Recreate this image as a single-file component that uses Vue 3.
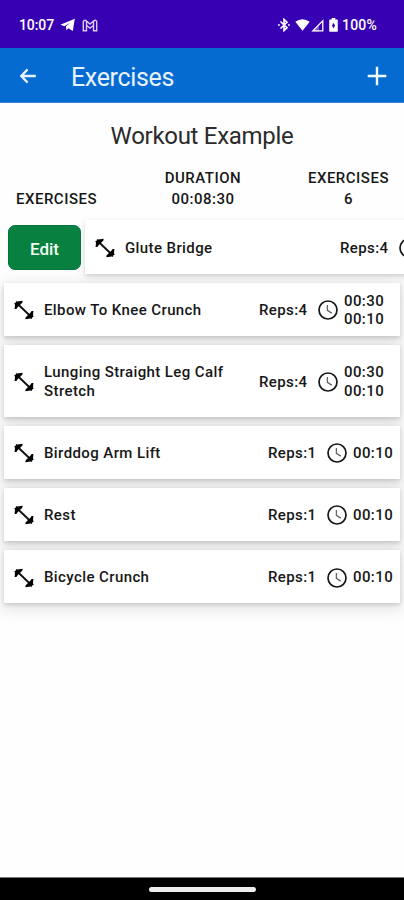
<script setup>
const exercises = [
  { name: 'Glute Bridge', reps: 4, times: [], swiped: true },
  { name: 'Elbow To Knee Crunch', reps: 4, times: ['00:30', '00:10'] },
  { name: 'Lunging Straight Leg Calf Stretch', reps: 4, times: ['00:30', '00:10'], tall: true },
  { name: 'Birddog Arm Lift', reps: 1, times: ['00:10'] },
  { name: 'Rest', reps: 1, times: ['00:10'] },
  { name: 'Bicycle Crunch', reps: 1, times: ['00:10'] },
]
</script>

<template>
  <div class="screen">
    <header class="status">
      <div class="status-left">
        <span class="clock-text">10:07</span>
        <svg class="telegram" width="16" height="14" viewBox="0 0 16 14">
          <path d="M.4 6.8 14.8.8 12.8 13 8.4 10.2 6.4 12.2 5.9 8.6 10.5 4.6 4.5 8.2Z" fill="#fff" />
        </svg>
        <svg class="gmail" width="16" height="13" viewBox="0 0 16 13">
          <path d="M4.5 11.8H1.3V2.3Q2.8.3 4.5 2L8 5 11.5 2Q13.2.3 14.7 2.3V11.8H11.5V6.3L8 9.2 4.5 6.3ZM4.5 2V6.3M11.5 2V6.3" fill="none" stroke="#d9cbf6" stroke-width="1.4" />
        </svg>
      </div>
      <div class="status-right">
        <svg width="12" height="14" viewBox="0 0 12 14">
          <path d="M2.5 3.5 9 9.8 6 12.6V1.4L9 4.2 2.5 10.5" fill="none" stroke="#fff" stroke-width="1.6" />
          <path d="M0 6.2h1.8v1.6H0zM10 6.2h1.8v1.6H10z" fill="#fff" />
        </svg>
        <svg class="wifi" width="15" height="12" viewBox="0 0 15 12">
          <path d="M.3 2.8Q7.5-2.4 14.7 2.8L7.5 11.8Z" fill="#fff" />
        </svg>
        <svg class="signal" width="13" height="13" viewBox="0 0 13 13">
          <path d="M1.8 11.9 11.8 1.8V11.9Z" fill="none" stroke="#fff" stroke-width="1.3" />
          <path d="M1 12.4 8 5.4V12.4Z" fill="#fff" opacity=".35" />
        </svg>
        <svg class="battery" width="9" height="14" viewBox="0 0 9 14">
          <path d="M2.7 0h3.6v1.5H8q.8 0 .8.8v10.6q0 .8-.8.8H1q-.8 0-.8-.8V2.3q0-.8.8-.8h1.7z" fill="#fff" />
          <path d="M4.5 4.8 6 7.5 4.5 10.4 3 7.5Z" fill="#3700b3" />
        </svg>
        <span class="percent">100%</span>
      </div>
    </header>

    <nav class="appbar">
      <svg width="18" height="18" viewBox="0 0 18 18">
        <path d="M16.8 9H2.6M8.6 2.4 2.3 9l6.3 6.6" fill="none" stroke="#e9f3ff" stroke-width="2.3" />
      </svg>
      <h1>Exercises</h1>
      <svg class="plus" width="20" height="20" viewBox="0 0 20 20">
        <path d="M10 .7V19.3M.7 10H19.3" stroke="#f4f9ff" stroke-width="2.4" />
      </svg>
    </nav>

    <h2>Workout Example</h2>
    <section class="summary">
      <div class="label">EXERCISES</div>
      <div class="stat duration"><span>DURATION</span><span class="num">00:08:30</span></div>
      <div class="stat count"><span>EXERCISES</span><span>6</span></div>
    </section>

    <main class="list">
      <div v-for="item in exercises" :key="item.name" class="row" :class="{ swiped: item.swiped }">
        <button v-if="item.swiped" class="edit">Edit</button>
        <article class="card" :class="{ tall: item.tall, wide: item.swiped || item.times.length > 1 }">
          <svg class="dumbbell" width="20" height="20" viewBox="0 0 20 20">
            <path d="M4 4.2 16 15.8" stroke="#111" stroke-width="1.9" />
            <path d="M.3 3.2 2.2 2.2 1.8.9 3.2 1.5 8.7.7 8.3 2.8 6.9 3.9 3.6 7.2 2.4 8.9.6 9 1 4.7Z" fill="#000" />
            <path d="M19.7 16.8 17.8 17.8 18.2 19.1 16.8 18.5 11.3 19.3 11.7 17.2 13.1 16.1 16.4 12.8 17.6 11.1 19.4 11 19 15.3Z" fill="#000" />
          </svg>
          <span class="name">{{ item.name }}</span>
          <span class="reps">Reps:{{ item.reps }}</span>
          <svg class="timer" width="20" height="20" viewBox="0 0 20 20">
            <circle cx="10" cy="10" r="9" fill="none" stroke="#161616" stroke-width="1.7" />
            <path d="M9.4 5V10.3L13.8 13.1" fill="none" stroke="#666" stroke-width="1.3" />
          </svg>
          <span class="times"><span v-for="time in item.times" :key="time">{{ time }}</span></span>
        </article>
      </div>
    </main>

    <footer class="navigation"><span class="handle"></span></footer>
  </div>
</template>

<style>
body { margin: 0; background: #fff; }
</style>

<style scoped>
* { box-sizing: border-box; }
.screen { width: 404px; height: 900px; overflow: hidden; display: flex; flex-direction: column; background: #fefefe; color: #171717; font-family: Roboto, sans-serif; }
.status { height: 48px; flex: none; display: flex; justify-content: space-between; padding: 2px 27px 0 19px; background: #3700b3; color: #fff; font-size: 14px; font-weight: 500; }
.status-left, .status-right { display: flex; align-items: center; }
.clock-text { width: 41px; letter-spacing: -.1px; }
.gmail { margin-left: 6px; }
.wifi { margin-left: 5px; }
.signal { margin-left: 1px; }
.battery { margin-left: 5px; margin-right: 4px; }
.percent { width: 35px; letter-spacing: .2px; white-space: nowrap; }
.appbar { height: 55px; flex: none; display: flex; align-items: center; padding: 2px 17px 0 19px; background: #056bd0; color: #e9f3ff; border-bottom: 1px solid #3c83d4; }
h1 { margin: 4px 0 0 34px; font-size: 25px; line-height: 30px; font-weight: 400; letter-spacing: -.35px; }
.plus { margin-left: auto; }
h2 { height: 30px; margin: 18px 0 0; text-align: center; font-size: 24px; line-height: 30px; font-weight: 400; letter-spacing: -.3px; color: #2b2b2b; }
.summary { height: 69.4px; display: flex; align-items: flex-end; padding: 0 15px 10.4px 16px; font-size: 15px; font-weight: 500; line-height: 21px; letter-spacing: .5px; }
.label { width: 148.5px; }
.stat { display: flex; flex-direction: column; align-items: center; }
.duration { width: 77px; }
.count { margin-left: auto; }
.list { display: flex; flex-direction: column; gap: 9.4px; isolation: isolate; }
.row { display: flex; padding: 0 4px; }
.row.swiped { padding: 0; }
.edit { width: 73px; height: 45px; margin: 4.6px 4px 0 8px; flex: none; border: 1px solid #067440; border-radius: 7px; background: #08803f; color: #effff5; font: 500 17px Roboto, sans-serif; padding: 3px 0 0; position: relative; }
.card { width: 396px; height: 52.7px; flex: none; display: flex; align-items: center; padding: 2px 7px 0 10px; background: #fff; font-size: 15px; line-height: 18.5px; font-weight: 500; letter-spacing: .4px; position: relative; }
.swiped .card { height: 53.2px; }
.card::before { content: ""; position: absolute; inset: 0; z-index: -1; box-shadow: 0 2px 4px rgba(0, 0, 0, .15), 0 4px 16px 3px rgba(0, 0, 0, .1); }
.swiped .card::before { box-shadow: 0 2px 4px rgba(0, 0, 0, .13), 0 4px 12px rgba(0, 0, 0, .07); }
.card.wide { padding-right: 16px; }
.card.tall { height: 71.6px; }
.dumbbell { flex: none; }
.name { width: 190px; margin-left: 10px; }
.reps { margin-left: auto; white-space: nowrap; }
.timer { flex: none; margin: 0 6.5px 0 10px; }
.times { width: 40px; display: flex; flex-direction: column; white-space: nowrap; }
.navigation { height: 23px; flex: none; display: flex; align-items: center; justify-content: center; margin-top: auto; background: #000; border-top: 1px solid #777; }
.handle { width: 107px; height: 5px; border-radius: 3px; background: #eee; }
</style>
